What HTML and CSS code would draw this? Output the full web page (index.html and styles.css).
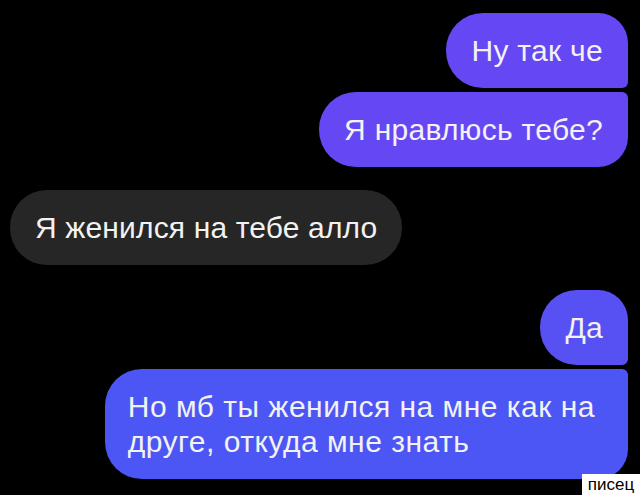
FILE: index.html
```html
<!DOCTYPE html>
<html lang="ru">
<head>
    <meta charset="UTF-8">
    <meta name="viewport" content="width=device-width, initial-scale=1.0">
    <title>Чат</title>
    <link rel="stylesheet" href="styles.css">
</head>
<body>
    <div class="chat">
        <div class="msg out first">Ну так че</div>
        <div class="msg out last tight">Я нравлюсь тебе?</div>
        <div class="msg in">Я женился на тебе алло</div>
        <div class="msg out first blue1">Да</div>
        <div class="msg out last tight blue2">Но мб ты женился на мне как на<br>друге, откуда мне знать</div>
    </div>
    <div class="watermark">писец</div>
</body>
</html>
```

FILE: styles.css
```css
body {
    margin: 0;
    padding: 0;
    background-color: #000;
    font-family: 'Liberation Sans', Arial, sans-serif;
    width: 640px;
    height: 495px;
    overflow: hidden;
    position: relative;
}
.chat {
    display: flex;
    flex-direction: column;
    padding: 13px 12px 0 10px;
}
.msg {
    color: #f2f2f2;
    font-size: 30px;
    letter-spacing: 0.3px;
    line-height: 35px;
    padding: 20px 25px;
    border-radius: 37px;
    margin-top: 23px;
    white-space: nowrap;
}
.msg:first-child {
    margin-top: 0;
}
.msg.tight {
    margin-top: 4px;
}
.out {
    align-self: flex-end;
    background-color: #6647f4;
}
.out.first {
    border-radius: 37px 30px 6px 37px;
}
.out.last {
    border-radius: 37px 6px 30px 37px;
}
.in {
    align-self: flex-start;
    background-color: #262626;
    margin-top: 23px;
    letter-spacing: 0.15px;
}
.in + .msg {
    margin-top: 25px;
}
.blue1 {
    background-color: #5750f3;
}
.blue2 {
    background-color: #4c56f5;
    letter-spacing: 0.5px;
    padding: 20px 33px 20px 23px;
    border-radius: 30px 6px 30px 30px;
}
.watermark {
    position: absolute;
    right: 0;
    bottom: 0;
    width: 58px;
    height: 21px;
    background: #fff;
    color: #000;
    font-family: 'Liberation Sans', Arial, sans-serif;
    font-size: 17px;
    line-height: 21px;
    text-align: center;
}
```
